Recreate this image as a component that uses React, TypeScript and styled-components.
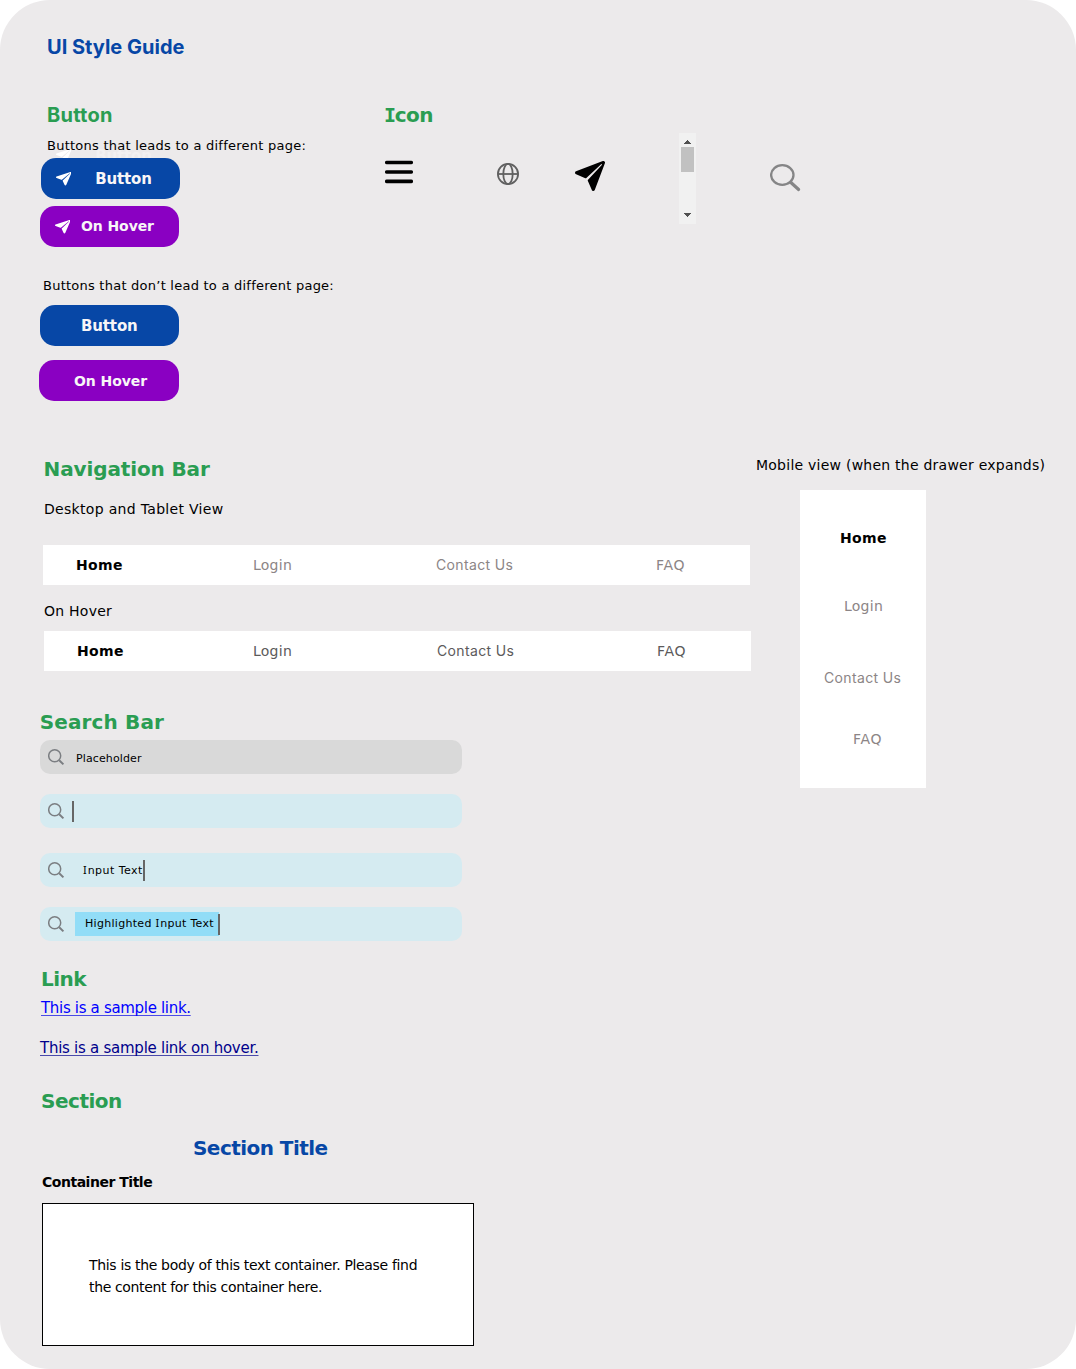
import React from "react";
import styled, { createGlobalStyle, css } from "styled-components";

const color = {
  sheet: "#eceaeb",
  blue: "#0747a6",
  purple: "#8a00c2",
  green: "#2a9d52",
  muted: "#8c8586",
  mutedHover: "#5c5a5b",
  onButton: "#f8f6f7",
};

const verdana = `"DejaVu Sans", sans-serif`;
const inter = `Inter, sans-serif`;

const GlobalStyle = createGlobalStyle`
  *, *::before, *::after { box-sizing: border-box; }
  html, body { margin: 0; padding: 0; background: #fff; }
  h1, h2, h3, p { margin: 0; }
`;

/* ---------- page frame ---------- */

const Sheet = styled.main`
  width: 1076px;
  height: 1369px;
  padding: 35px 0 0 39px;
  border-radius: 50px;
  background: ${color.sheet};
  color: #000;
  font-family: ${verdana};
  overflow: hidden;
`;

const Row = styled.div<{ $top: number }>`
  display: flex;
  align-items: flex-start;
  margin-top: ${(p) => p.$top}px;
`;

const Column = styled.div<{ $width?: number; $pad?: number }>`
  display: flex;
  flex-direction: column;
  align-items: flex-start;
  flex: none;
  width: ${(p) => (p.$width ? `${p.$width}px` : "auto")};
  padding-top: ${(p) => p.$pad ?? 0}px;
`;

/* ---------- typography ---------- */

interface TextProps {
  $top?: number;
  $left?: number;
  $track?: number;
}

const place = css<TextProps>`
  margin-top: ${(p) => p.$top ?? 0}px;
  margin-left: ${(p) => p.$left ?? 0}px;
  letter-spacing: ${(p) => p.$track ?? 0}px;
  white-space: nowrap;
`;

const PageTitle = styled.h1<TextProps>`
  ${place}
  font: 700 20px/24px ${inter};
  color: ${color.blue};
`;

const Heading = styled.h2<TextProps & { $inter?: boolean }>`
  ${place}
  font: 700 20px/24px ${(p) => (p.$inter ? inter : verdana)};
  color: ${color.green};
`;

const SectionTitle = styled.h3<TextProps>`
  ${place}
  font: 700 20px/24px ${verdana};
  color: ${color.blue};
`;

const ContainerTitle = styled.h3<TextProps>`
  ${place}
  font: 700 14px/20px ${verdana};
`;

const Caption = styled.p<TextProps>`
  ${place}
  position: relative;
  z-index: 1;
  font-size: 13px;
  line-height: 19px;
`;

const ViewLabel = styled.p<TextProps>`
  ${place}
  font-size: 14px;
  line-height: 20px;
`;

const SerifBoldI = styled.span`
  font-family: "DejaVu Sans Mono", monospace;
  letter-spacing: -1.4px;
`;

const SerifI = styled.span`
  font-family: "Noto Sans", sans-serif;
  line-height: 1;
  letter-spacing: 0.9px;
`;

/* ---------- buttons ---------- */

const ButtonBox = styled.button<{
  $hover?: boolean;
  $top: number;
  $left: number;
  $width?: number;
  $indent: number;
  $drop?: number;
}>`
  position: relative;
  display: flex;
  align-items: flex-start;
  width: ${(p) => p.$width ?? 139}px;
  height: 41px;
  margin: ${(p) => p.$top}px 0 0 ${(p) => p.$left}px;
  padding: ${(p) => p.$drop ?? 10}px 0 0 ${(p) => p.$indent}px;
  border: 0;
  border-radius: 15px;
  background: ${(p) => (p.$hover ? color.purple : color.blue)};
  color: ${color.onButton};
  font: 700 ${(p) => (p.$hover ? "14px/20px" : "15px/22px")} ${verdana};
  letter-spacing: ${(p) => (p.$hover ? -0.08 : -0.14)}px;
  white-space: nowrap;
`;

const ButtonStack = styled.div`
  position: relative;
  z-index: 0;
`;

const ButtonGhost = styled.div`
  position: absolute;
  z-index: -1;
  top: -10px;
  left: 2px;
  display: flex;
  padding: 0 0 0 14.7px;
  color: #f2f0f1;
  font: 700 15px/22px ${verdana};
  letter-spacing: -0.14px;
`;

const ButtonPlane = styled.span<{ $gap: number; $drop?: number }>`
  display: block;
  flex: none;
  height: 14px;
  margin-top: ${(p) => p.$drop ?? 4}px;
  margin-right: ${(p) => p.$gap}px;
  color: #fff;
  line-height: 0;
`;

const PlaneIcon = ({ width, height }: { width: number; height: number }) => (
  <svg width={width} height={height} viewBox="32 32 448 448" preserveAspectRatio="none" fill="currentColor" aria-hidden>
    <path d="M473 39.05a24 24 0 00-25.5-5.46L47.47 185h-.08a24 24 0 001 45.16l.41.13 137.3 58.63a16 16 0 0015.54-3.59L422 80a7.07 7.07 0 0110 10L226.66 310.26a16 16 0 00-3.59 15.54l58.65 137.38c.06.2.12.38.19.57 3.2 9.27 11.3 15.81 21.09 16.25h1a24.63 24.63 0 0023-15.46L478.39 64.62A24 24 0 00473 39.05z" />
  </svg>
);

/* ---------- icon strip ---------- */

const IconStrip = styled.div`
  display: flex;
  align-items: flex-start;
  margin-top: 6px;
  margin-left: 1px;
`;

const IconSlot = styled.div<{ $drop?: number; $gap?: number }>`
  flex: none;
  margin: ${(p) => p.$drop ?? 0}px ${(p) => p.$gap ?? 0}px 0 0;
  line-height: 0;
`;

const ScrollTrack = styled.div`
  display: flex;
  flex-direction: column;
  align-items: center;
  width: 17px;
  height: 91px;
  padding: 7px 0;
  background: #f1f1f1;
`;

const ScrollThumb = styled.div`
  width: 13px;
  height: 25px;
  margin: 3px 0 auto;
  background: #c1c1c1;
`;

const MenuIcon = () => (
  <svg width="28" height="24" viewBox="0 0 28 24" stroke="#000" strokeWidth="3.7" strokeLinecap="round" aria-hidden>
    <path d="M1.8 2.5h24.4M1.8 12h24.4M1.8 21.4h24.4" />
  </svg>
);

const GlobeIcon = () => (
  <svg width="22" height="22" viewBox="0 0 22 22" fill="none" stroke="#606060" strokeWidth="1.8" aria-hidden>
    <circle cx="11" cy="11" r="10.1" />
    <ellipse cx="11" cy="11" rx="4.7" ry="10.1" />
    <path d="M1 11h20" />
  </svg>
);

const ArrowIcon = ({ down }: { down?: boolean }) => (
  <svg width="7" height="4" viewBox="0 0 7 4" fill="#505050" shapeRendering="crispEdges" aria-hidden>
    <path d={down ? "M0 0h7v1h-1v1h-1v1h-1v1h-1v-1h-1v-1h-1v-1h-1z" : "M0 4h7v-1h-1v-1h-1v-1h-1v-1h-1v1h-1v1h-1v1h-1z"} />
  </svg>
);

const LargeSearchIcon = () => (
  <svg width="31" height="28" viewBox="0 0 31 28" fill="none" stroke="#858586" aria-hidden>
    <ellipse cx="12.3" cy="11" rx="11.2" ry="9.8" strokeWidth="2.3" />
    <path d="M20.6 18.3L28.6 25.5" strokeWidth="3.2" strokeLinecap="round" />
  </svg>
);

/* ---------- navigation ---------- */

const NavBar = styled.nav<{ $top: number; $left: number; $columns: string; $hover?: boolean }>`
  display: grid;
  grid-template-columns: ${(p) => p.$columns};
  width: 707px;
  height: 40px;
  margin: ${(p) => p.$top}px 0 0 ${(p) => p.$left}px;
  padding: 10px 0 0 33px;
  background: #fff;
  color: ${(p) => (p.$hover ? color.mutedHover : color.muted)};
`;

const Drawer = styled.nav`
  display: flex;
  flex-direction: column;
  align-items: flex-start;
  width: 126px;
  height: 298px;
  margin: 15px 0 0 44px;
  padding-top: 38px;
  background: #fff;
  color: ${color.muted};
`;

const NavItem = styled.a<TextProps & { $current?: boolean; $inter?: boolean }>`
  ${place}
  font-family: ${(p) => (p.$inter ? inter : verdana)};
  font-size: 14px;
  line-height: ${(p) => (p.$inter ? 19 : 20)}px;
  font-weight: ${(p) => (p.$current ? 700 : 400)};
  ${(p) => p.$current && "color: #000;"}
`;

/* ---------- search fields ---------- */

const Field = styled.div<{ $top: number; $active?: boolean }>`
  display: flex;
  align-items: flex-start;
  width: 422px;
  height: 34px;
  margin: ${(p) => p.$top}px 0 0 1px;
  padding-left: 8px;
  border-radius: 10px;
  background: ${(p) => (p.$active ? "#d5ebf1" : "#d9d9d9")};
  font-size: 11px;
  line-height: 15px;
`;

const FieldIcon = styled.span`
  flex: none;
  width: 16px;
  margin-top: 9px;
  line-height: 0;
`;

const FieldText = styled.span<{ $top: number; $left: number; $width?: number; $track: number }>`
  flex: none;
  width: ${(p) => (p.$width ? `${p.$width}px` : "auto")};
  margin: ${(p) => p.$top}px 0 0 ${(p) => p.$left}px;
  letter-spacing: ${(p) => p.$track}px;
  white-space: nowrap;
`;

const Selection = styled.mark`
  flex: none;
  width: 144px;
  height: 24px;
  margin: 5px 0 0 11px;
  padding: 4px 0 0 10px;
  background: #92ddf7;
  color: #000;
  letter-spacing: 0.3px;
  white-space: nowrap;
`;

const Caret = styled.i<{ $left?: number }>`
  flex: none;
  width: 2px;
  height: 21px;
  margin: 7px 0 0 ${(p) => p.$left ?? 0}px;
  background: #666;
`;

const SearchIcon = () => (
  <FieldIcon>
    <svg width="17" height="17" viewBox="0 0 17 17" fill="none" stroke="#7b7e82" aria-hidden>
      <circle cx="6.7" cy="6.8" r="6" strokeWidth="1.5" />
      <path d="M11.2 11.3L15.4 15.4" strokeWidth="2" />
    </svg>
  </FieldIcon>
);

/* ---------- links & container ---------- */

const SampleLink = styled.a<TextProps & { $hover?: boolean }>`
  ${place}
  color: ${(p) => (p.$hover ? "#00008b" : "#0000ff")};
  font-size: 15px;
  line-height: 22px;
  text-decoration-line: underline;
  text-decoration-thickness: 1px;
  text-decoration-color: ${(p) => (p.$hover ? "#4a4aab" : "#4a4ae6")};
  text-decoration-skip-ink: none;
  text-underline-offset: 2px;
`;

const TextContainer = styled.div`
  width: 432px;
  height: 143px;
  margin: 11px 0 0 3px;
  padding: 50px 0 0 46px;
  border: 1px solid #000;
  background: #fff;
  font-size: 14px;
  line-height: 22px;
`;

const Line = styled.span<{ $track: number }>`
  display: block;
  letter-spacing: ${(p) => p.$track}px;
  white-space: nowrap;
`;

export default function App() {
  return (
    <>
      <GlobalStyle />
      <Sheet>
        <PageTitle $left={8}>UI Style Guide</PageTitle>

        <Row $top={44}>
          <Column $width={345}>
            <Heading $inter $left={8} $track={0.25}>Button</Heading>
            <Caption $top={9} $left={8} $track={0.25}>Buttons that leads to a different page:</Caption>
            <ButtonStack>
              <ButtonGhost aria-hidden>
                <ButtonPlane $gap={24}>
                  <PlaneIcon width={15.5} height={13.5} />
                </ButtonPlane>
                Button
              </ButtonGhost>
              <ButtonBox $top={3} $left={2} $indent={14.7}>
                <ButtonPlane $gap={24}>
                  <PlaneIcon width={15.5} height={13.5} />
                </ButtonPlane>
                Button
              </ButtonBox>
            </ButtonStack>
            <ButtonBox $hover $top={7} $left={1} $indent={14.7}>
              <ButtonPlane $gap={10.8}>
                <PlaneIcon width={15.5} height={13.5} />
              </ButtonPlane>
              On Hover
            </ButtonBox>
            <Caption $top={29} $left={4} $track={0.24}>Buttons that don’t lead to a different page:</Caption>
            <ButtonBox $top={10} $left={1} $indent={41}>Button</ButtonBox>
            <ButtonBox $hover $top={14} $left={0} $width={140} $indent={35} $drop={11}>On Hover</ButtonBox>
          </Column>

          <Column>
            <Heading $left={0} $track={-0.5}>
              <SerifBoldI>I</SerifBoldI>con
            </Heading>
            <IconStrip>
              <IconSlot $drop={27} $gap={84}><MenuIcon /></IconSlot>
              <IconSlot $drop={30} $gap={56}><GlobeIcon /></IconSlot>
              <IconSlot $drop={28} $gap={74}><PlaneIcon width={30} height={30} /></IconSlot>
              <IconSlot $gap={74}>
                <ScrollTrack>
                  <ArrowIcon />
                  <ScrollThumb />
                  <ArrowIcon down />
                </ScrollTrack>
              </IconSlot>
              <IconSlot $drop={31}><LargeSearchIcon /></IconSlot>
            </IconStrip>
          </Column>
        </Row>

        <Row $top={54}>
          <Column $width={717} $pad={2}>
            <Heading $left={4.6} $track={-0.13}>Navigation Bar</Heading>
            <ViewLabel $top={18} $left={5} $track={0.31}>Desktop and Tablet View</ViewLabel>
            <NavBar $top={26} $left={4} $columns="177px 183px 220px 1fr">
              <NavItem $current $track={0.33}>Home</NavItem>
              <NavItem $track={0.25}>Login</NavItem>
              <NavItem $inter $track={0.36}>Contact Us</NavItem>
              <NavItem $track={0.75}>FAQ</NavItem>
            </NavBar>
            <ViewLabel $top={16} $left={5} $track={0.24}>On Hover</ViewLabel>
            <NavBar $hover $top={10} $left={5} $columns="176px 184px 220px 1fr">
              <NavItem $current $track={0.33}>Home</NavItem>
              <NavItem $track={0.25}>Login</NavItem>
              <NavItem $inter $track={0.36}>Contact Us</NavItem>
              <NavItem $track={0.75}>FAQ</NavItem>
            </NavBar>

            <Heading $top={39} $left={0.8} $track={0.12}>Search Bar</Heading>
            <Field $top={6}>
              <SearchIcon />
              <FieldText $top={11} $left={12} $track={0.12}>Placeholder</FieldText>
            </Field>
            <Field $active $top={20}>
              <SearchIcon />
              <Caret $left={8} />
            </Field>
            <Field $active $top={25}>
              <SearchIcon />
              <FieldText $top={10} $left={19} $width={60} $track={0.46}>
                <SerifI>I</SerifI>nput Text
              </FieldText>
              <Caret />
            </Field>
            <Field $active $top={20}>
              <SearchIcon />
              <Selection>
                Highlighted <SerifI>I</SerifI>nput Text
              </Selection>
              <Caret $left={-1} />
            </Field>

            <Heading $top={26} $left={2} $track={-0.5}>Link</Heading>
            <SampleLink $top={6} $left={2} $track={-0.32}>This is a sample link.</SampleLink>
            <SampleLink $hover $top={18} $left={1} $track={-0.26}>This is a sample link on hover.</SampleLink>

            <Heading $top={30} $left={2} $track={-0.48}>Section</Heading>
            <SectionTitle $top={23} $left={154} $track={-0.54}>Section Title</SectionTitle>
            <ContainerTitle $top={12} $left={3} $track={-0.48}>Container Title</ContainerTitle>
            <TextContainer>
              <Line $track={-0.335}>This is the body of this text container. Please find</Line>
              <Line $track={-0.36}>the content for this container here.</Line>
            </TextContainer>
          </Column>

          <Column>
            <ViewLabel $track={0.24}>Mobile view (when the drawer expands)</ViewLabel>
            <Drawer>
              <NavItem $current $left={40} $track={0.33}>Home</NavItem>
              <NavItem $top={48} $left={44} $track={0.25}>Login</NavItem>
              <NavItem $inter $top={52} $left={24} $track={0.36}>Contact Us</NavItem>
              <NavItem $top={42} $left={53} $track={0.75}>FAQ</NavItem>
            </Drawer>
          </Column>
        </Row>
      </Sheet>
    </>
  );
}
